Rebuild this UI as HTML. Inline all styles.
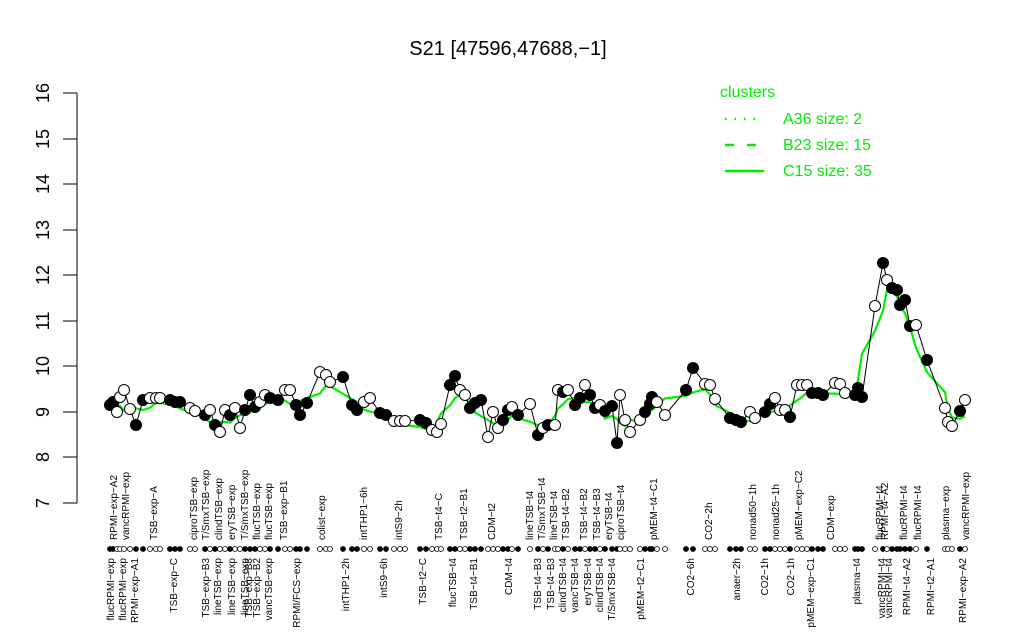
<!DOCTYPE html>
<html><head><meta charset="utf-8"><style>
html,body{margin:0;padding:0;background:#fff;width:1024px;height:640px;overflow:hidden}
svg{display:block;font-family:"Liberation Sans",sans-serif}
</style></head><body>
<svg id="s" width="1024" height="640" viewBox="0 0 1024 640">
<text x="508" y="55" font-size="20" text-anchor="middle">S21 [47596,47688,−1]</text>
<g stroke="#000" stroke-width="1">
<line x1="77" y1="93" x2="77" y2="503"/>
<line x1="63" y1="503" x2="77" y2="503"/><line x1="63" y1="457" x2="77" y2="457"/><line x1="63" y1="412" x2="77" y2="412"/><line x1="63" y1="366" x2="77" y2="366"/><line x1="63" y1="321" x2="77" y2="321"/><line x1="63" y1="275" x2="77" y2="275"/><line x1="63" y1="230" x2="77" y2="230"/><line x1="63" y1="184" x2="77" y2="184"/><line x1="63" y1="139" x2="77" y2="139"/><line x1="63" y1="93" x2="77" y2="93"/>
</g>
<g font-size="18" text-anchor="middle">
<text transform="translate(49,503) rotate(-90)">7</text><text transform="translate(49,457) rotate(-90)">8</text><text transform="translate(49,412) rotate(-90)">9</text><text transform="translate(49,366) rotate(-90)">10</text><text transform="translate(49,321) rotate(-90)">11</text><text transform="translate(49,275) rotate(-90)">12</text><text transform="translate(49,230) rotate(-90)">13</text><text transform="translate(49,184) rotate(-90)">14</text><text transform="translate(49,139) rotate(-90)">15</text><text transform="translate(49,93) rotate(-90)">16</text>
</g>
<g fill="#00ee00" font-size="16">
<text x="720" y="97">clusters</text>
<text x="783" y="124">A36 size: 2</text>
<text x="783" y="150">B23 size: 15</text>
<text x="783" y="176">C15 size: 35</text>
</g>
<g stroke="#00ee00" stroke-width="2.5">
<line x1="725" y1="119" x2="762" y2="119" stroke-dasharray="1.5 8"/>
<line x1="725" y1="145" x2="760" y2="145" stroke-dasharray="9 13"/>
<line x1="725" y1="171" x2="764" y2="171"/>
</g>
<g id="lines"></g><g id="pts"></g><g id="dots"></g>
<g font-size="10" id="top">
<text transform="translate(117,540) rotate(-90)">RPMI−exp−A2</text>
<text transform="translate(129,540) rotate(-90)">vancRPMI−exp</text>
<text transform="translate(157,540) rotate(-90)">TSB−exp−A</text>
<text transform="translate(197,540) rotate(-90)">ciproTSB−exp</text>
<text transform="translate(209,540) rotate(-90)">T/SmxTSB−exp</text>
<text transform="translate(222,540) rotate(-90)">clindTSB−exp</text>
<text transform="translate(235,540) rotate(-90)">eryTSB−exp</text>
<text transform="translate(248,540) rotate(-90)">T/SmxTSB−exp</text>
<text transform="translate(260,540) rotate(-90)">flucTSB−exp</text>
<text transform="translate(272,540) rotate(-90)">flucTSB−exp</text>
<text transform="translate(287,540) rotate(-90)">TSB−exp−B1</text>
<text transform="translate(325,540) rotate(-90)">colist−exp</text>
<text transform="translate(367,540) rotate(-90)">intTHP1−6h</text>
<text transform="translate(402,540) rotate(-90)">intS9−2h</text>
<text transform="translate(442,540) rotate(-90)">TSB−t4−C</text>
<text transform="translate(467,540) rotate(-90)">TSB−t2−B1</text>
<text transform="translate(495,540) rotate(-90)">CDM−t2</text>
<text transform="translate(533,540) rotate(-90)">lineTSB−t4</text>
<text transform="translate(545,540) rotate(-90)">T/SmxTSB−t4</text>
<text transform="translate(557,540) rotate(-90)">lineTSB−t4</text>
<text transform="translate(569,540) rotate(-90)">TSB−t4−B2</text>
<text transform="translate(587,540) rotate(-90)">TSB−t4−B2</text>
<text transform="translate(600,540) rotate(-90)">TSB−t4−B3</text>
<text transform="translate(612,540) rotate(-90)">eryTSB−t4</text>
<text transform="translate(624,540) rotate(-90)">ciproTSB−t4</text>
<text transform="translate(657,540) rotate(-90)">pMEM−t4−C1</text>
<text transform="translate(712,540) rotate(-90)">CO2−2h</text>
<text transform="translate(756,540) rotate(-90)">nonad50−1h</text>
<text transform="translate(779,540) rotate(-90)">nonad25−1h</text>
<text transform="translate(802,540) rotate(-90)">pMEM−exp−C2</text>
<text transform="translate(834,540) rotate(-90)">CDM−exp</text>
<text transform="translate(883,540) rotate(-90)">flucRPMI−t4</text>
<text transform="translate(888,540) rotate(-90)">RPMI−t4−A2</text>
<text transform="translate(907,540) rotate(-90)">flucRPMI−t4</text>
<text transform="translate(921,540) rotate(-90)">flucRPMI−t4</text>
<text transform="translate(949,540) rotate(-90)">plasma−exp</text>
<text transform="translate(969,540) rotate(-90)">vancRPMI−exp</text>
</g>
<g font-size="10" text-anchor="end">
<text transform="translate(114,558) rotate(-90)">flucRPMI−exp</text>
<text transform="translate(126,558) rotate(-90)">flucRPMI−exp</text>
<text transform="translate(138,558) rotate(-90)">RPMI−exp−A1</text>
<text transform="translate(177,558) rotate(-90)">TSB−exp−C</text>
<text transform="translate(209,558) rotate(-90)">TSB−exp−B3</text>
<text transform="translate(221,558) rotate(-90)">lineTSB−exp</text>
<text transform="translate(235,558) rotate(-90)">lineTSB−exp</text>
<text transform="translate(248,558) rotate(-90)">lineTSB−exp</text>
<text transform="translate(252,558) rotate(-90)">TSB−exp−B3</text>
<text transform="translate(260,558) rotate(-90)">TSB−exp−B2</text>
<text transform="translate(272,558) rotate(-90)">vancTSB−exp</text>
<text transform="translate(300,558) rotate(-90)">RPMI/FCS−exp</text>
<text transform="translate(349,558) rotate(-90)">intTHP1−2h</text>
<text transform="translate(387,558) rotate(-90)">intS9−6h</text>
<text transform="translate(426,558) rotate(-90)">TSB−t2−C</text>
<text transform="translate(456,558) rotate(-90)">flucTSB−t4</text>
<text transform="translate(477,558) rotate(-90)">TSB−t4−B1</text>
<text transform="translate(512,558) rotate(-90)">CDM−t4</text>
<text transform="translate(541,558) rotate(-90)">TSB−t4−B3</text>
<text transform="translate(554,558) rotate(-90)">TSB−t4−B3</text>
<text transform="translate(566,558) rotate(-90)">clindTSB−t4</text>
<text transform="translate(578,558) rotate(-90)">vancTSB−t4</text>
<text transform="translate(591,558) rotate(-90)">eryTSB−t4</text>
<text transform="translate(603,558) rotate(-90)">clindTSB−t4</text>
<text transform="translate(615,558) rotate(-90)">T/SmxTSB−t4</text>
<text transform="translate(644,558) rotate(-90)">pMEM−t2−C1</text>
<text transform="translate(694,558) rotate(-90)">CO2−6h</text>
<text transform="translate(740,558) rotate(-90)">anaer−2h</text>
<text transform="translate(768,558) rotate(-90)">CO2−1h</text>
<text transform="translate(794,558) rotate(-90)">CO2−1h</text>
<text transform="translate(814,558) rotate(-90)">pMEM−exp−C1</text>
<text transform="translate(860,558) rotate(-90)">plasma−t4</text>
<text transform="translate(885,558) rotate(-90)">vancRPMI−t4</text>
<text transform="translate(892,558) rotate(-90)">vancRPMI−t4</text>
<text transform="translate(910,558) rotate(-90)">RPMI−t4−A2</text>
<text transform="translate(934,558) rotate(-90)">RPMI−t2−A1</text>
<text transform="translate(966,558) rotate(-90)">RPMI−exp−A2</text>
</g>
</svg>
<script>
var P=[[110,405,1],[113,402,1],[117,412,0],[120,397,0],[124,390,0],[130,409,0],[136,425,1],[143,400,1],[150,398,0],[156,398,0],[160,398,0],[170,400,1],[175,402,1],[180,402,1],[190,408,0],[195,411,0],[205,415,1],[210,410,0],[215,425,1],[220,432,0],[225,410,0],[230,415,1],[235,408,0],[240,428,0],[245,410,1],[250,395,1],[255,407,1],[260,402,0],[265,395,0],[270,398,1],[278,400,1],[285,390,0],[290,390,0],[296,405,1],[300,415,1],[307,403,1],[320,372,0],[326,375,0],[330,382,0],[343,377,1],[352,405,1],[357,410,1],[364,402,0],[370,398,0],[380,413,1],[386,415,1],[394,421,0],[400,421,0],[405,421,0],[420,420,1],[426,423,1],[432,430,0],[437,432,0],[441,424,0],[450,385,1],[455,376,1],[460,390,0],[465,395,0],[470,408,1],[475,403,1],[481,400,1],[488,437,0],[493,412,0],[498,428,0],[503,420,1],[508,410,1],[512,407,0],[518,415,1],[530,404,0],[538,435,1],[543,428,0],[548,425,1],[555,425,0],[558,390,0],[563,392,1],[568,390,0],[575,405,1],[580,398,1],[585,385,0],[590,395,1],[595,408,1],[600,405,0],[605,411,1],[612,406,1],[617,443,1],[620,395,0],[625,420,0],[630,432,0],[640,420,0],[645,412,1],[650,404,1],[652,397,1],[657,402,0],[665,415,0],[686,390,1],[693,368,1],[705,384,0],[710,385,0],[715,399,0],[730,418,1],[736,420,1],[741,422,1],[750,412,0],[755,418,0],[765,412,1],[770,404,1],[775,398,0],[780,410,0],[785,410,0],[790,417,1],[797,385,0],[802,385,0],[807,385,0],[812,393,1],[818,393,1],[823,395,1],[835,383,0],[840,384,0],[845,393,0],[855,395,1],[858,388,1],[862,397,1],[875,306,0],[883,263,1],[887,280,0],[892,288,1],[897,290,1],[900,305,1],[905,300,1],[910,326,1],[916,325,0],[927,360,1],[945,408,0],[948,422,0],[952,426,0],[960,411,1],[965,400,0]];
var ns="http://www.w3.org/2000/svg";
function el(t,a,p){var e=document.createElementNS(ns,t);for(var k in a)e.setAttribute(k,a[k]);document.getElementById(p).appendChild(e);}
var g=[];for(var i=0;i<P.length;i++){var s=0,n=0;for(var j=Math.max(0,i-2);j<=Math.min(P.length-1,i+2);j++){s+=P[j][1];n++;}g.push(P[i][0]+","+(s/n+4).toFixed(1));}
el("polyline",{points:g.join(" "),fill:"none",stroke:"#00ee00","stroke-width":2.2},"lines");
el("polyline",{points:P.map(function(p){return p[0]+","+p[1]}).join(" "),fill:"none",stroke:"#000","stroke-width":1},"lines");
P.forEach(function(p){el("circle",{cx:p[0],cy:p[1],r:5.5,fill:p[2]?"#000":"#fff",stroke:"#000","stroke-width":1},"pts");
el("circle",{cx:p[0],cy:549,r:2.5,fill:p[2]?"#000":"#fff",stroke:"#000","stroke-width":0.8},"dots");});
</script>
</body></html>
